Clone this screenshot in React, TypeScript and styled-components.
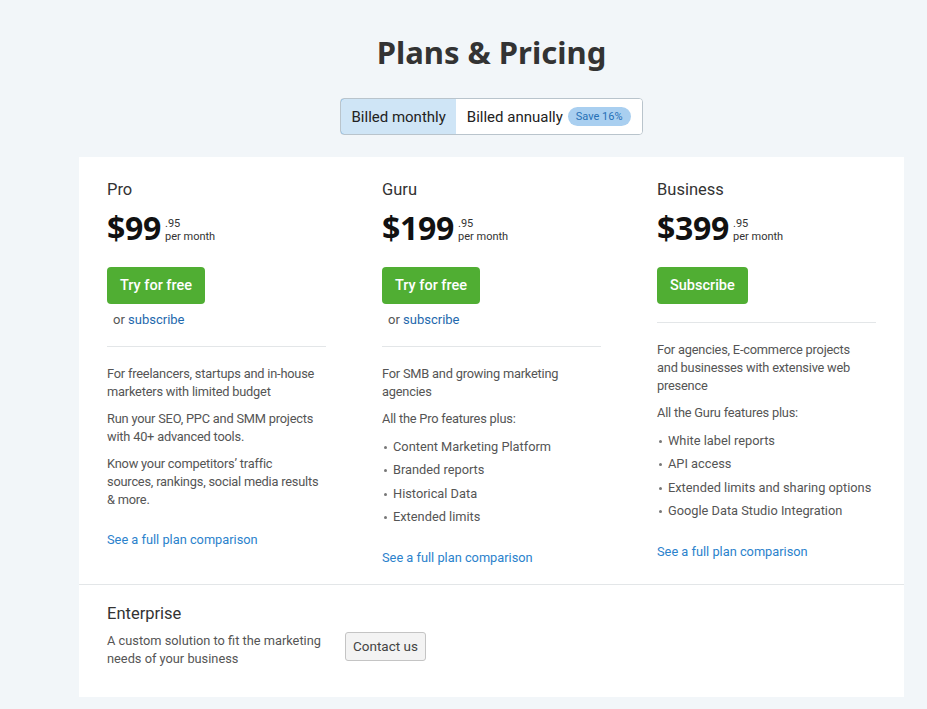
import React from "react";
import styled, { createGlobalStyle } from "styled-components";

const GlobalStyle = createGlobalStyle`
	body {
		margin: 0;
		background: #f2f6f9;
		font-family: Roboto, "Noto Sans", sans-serif;
		color: #333;
	}
`;

const Page = styled.div`
	display: flex;
	flex-direction: column;
	align-items: center;
	padding: 30px 0 0 56px;
`;

const Title = styled.h1`
	margin: 0;
	font-family: "Noto Sans", sans-serif;
	font-size: 31px;
	font-weight: 700;
	color: #333;
	line-height: 44px;
`;

const Toggle = styled.div`
	display: flex;
	margin-top: 24px;
	border: 1px solid #b9c4cc;
	border-radius: 4px;
	background: #fff;
	overflow: hidden;
	height: 35px;
`;

const ToggleOption = styled.div<{ $active?: boolean }>`
	display: flex;
	align-items: center;
	gap: 5px;
	padding: 0 10px;
	font-size: 15px;
	color: #222;
	background: ${(p) => (p.$active ? "#cfe5f6" : "#fff")};
	border: 1px solid ${(p) => (p.$active ? "#3b8fd2" : "transparent")};
	border-radius: ${(p) => (p.$active ? "4px 0 0 4px" : "0")};
	margin: -1px 0 -1px -1px;
`;

const Badge = styled.span`
	background: #a9cff0;
	color: #2670b6;
	font-size: 11px;
	border-radius: 10px;
	padding: 3px 8px;
`;

const Card = styled.div`
	margin-top: 22px;
	width: 825px;
	background: #fff;
`;

const Plans = styled.div`
	display: grid;
	grid-template-columns: repeat(3, 275px);
	padding-bottom: 17px;
	border-bottom: 1px solid #e3e6e8;
`;

const Plan = styled.div`
	padding: 21px 28px 0 28px;
	display: flex;
	flex-direction: column;
`;

const PlanName = styled.div`
	font-size: 16.5px;
	line-height: 24px;
	color: #333;
`;

const PriceRow = styled.div`
	display: flex;
	align-items: flex-start;
	margin-top: 7px;
	height: 38px;
`;

const Price = styled.span`
	font-family: "Noto Sans", sans-serif;
	font-size: 32px;
	font-weight: 700;
	color: #111;
	line-height: 38px;
	letter-spacing: -0.3px;
`;

const PriceNote = styled.span`
	display: flex;
	flex-direction: column;
	margin-left: 4px;
	margin-top: 8px;
	font-size: 11px;
	line-height: 13px;
	color: #333;
`;

const GreenButton = styled.button`
	align-self: flex-start;
	margin-top: 20px;
	height: 37px;
	padding: 0 13px;
	background: #50ae33;
	color: #fff;
	border: none;
	border-radius: 4px;
	font-family: inherit;
	font-size: 14.5px;
	font-weight: 500;
`;

const OrText = styled.div`
	margin: 7px 0 0 6px;
	font-size: 13px;
	line-height: 18px;
	color: #555;

	a {
		color: #1e68ad;
		text-decoration: none;
	}
`;

const Divider = styled.hr<{ $tight?: boolean }>`
	width: 100%;
	border: none;
	border-top: 1px solid #e3e6e8;
	margin: ${(p) => (p.$tight ? "18px 0 18px" : "17px 0 18px")};
`;

const Text = styled.p`
	margin: 0 0 9px;
	font-size: 12.8px;
	line-height: 18px;
	letter-spacing: -0.2px;
	white-space: pre-line;
	color: #555;
`;

const Features = styled.ul`
	margin: -2px 0 7px;
	padding-left: 11px;
	list-style: none;
`;

const Feature = styled.li`
	position: relative;
	font-size: 12.8px;
	line-height: 23.4px;
	color: #555;

	&::before {
		content: "";
		position: absolute;
		left: -9px;
		top: 11px;
		width: 3px;
		height: 3px;
		border-radius: 50%;
		background: #777;
	}
`;

const CompareLink = styled.a`
	margin-top: 13px;
	font-size: 12.8px;
	line-height: 18px;
	color: #2b82cc;
	text-decoration: none;
`;

const Enterprise = styled.div`
	display: flex;
	flex-direction: column;
	padding: 17px 28px 29px;
`;

const EnterpriseRow = styled.div`
	display: flex;
	align-items: flex-start;
	gap: 20px;
	margin-top: 6px;
`;

const EnterpriseText = styled.p`
	margin: 0;
	width: 218px;
	font-size: 12.8px;
	line-height: 18px;
	color: #555;
`;

const GreyButton = styled.button`
	height: 29px;
	padding: 0 7px;
	background: #f3f3f3;
	border: 1px solid #c4c4c4;
	border-radius: 3px;
	font-family: inherit;
	font-size: 13.5px;
	color: #444;
`;

type PlanData = {
	name: string;
	price: string;
	button: string;
	or?: boolean;
	texts: string[];
	features?: string[];
};

const plans: PlanData[] = [
	{
		name: "Pro",
		price: "$99",
		button: "Try for free",
		or: true,
		texts: [
			"For freelancers, startups and in-house marketers with limited budget",
			"Run your SEO, PPC and SMM projects with 40+ advanced tools.",
			"Know your competitors’ traffic\nsources, rankings, social media results & more.",
		],
	},
	{
		name: "Guru",
		price: "$199",
		button: "Try for free",
		or: true,
		texts: ["For SMB and growing marketing agencies", "All the Pro features plus:"],
		features: ["Content Marketing Platform", "Branded reports", "Historical Data", "Extended limits"],
	},
	{
		name: "Business",
		price: "$399",
		button: "Subscribe",
		texts: [
			"For agencies, E-commerce projects\nand businesses with extensive web presence",
			"All the Guru features plus:",
		],
		features: [
			"White label reports",
			"API access",
			"Extended limits and sharing options",
			"Google Data Studio Integration",
		],
	},
];

export default function App() {
	return (
		<>
			<GlobalStyle />
			<Page>
				<Title>Plans &amp; Pricing</Title>
				<Toggle>
					<ToggleOption $active>Billed monthly</ToggleOption>
					<ToggleOption>
						Billed annually <Badge>Save 16%</Badge>
					</ToggleOption>
				</Toggle>
				<Card>
					<Plans>
						{plans.map((plan) => (
							<Plan key={plan.name}>
								<PlanName>{plan.name}</PlanName>
								<PriceRow>
									<Price>{plan.price}</Price>
									<PriceNote>
										<span>.95</span>
										<span>per month</span>
									</PriceNote>
								</PriceRow>
								<GreenButton>{plan.button}</GreenButton>
								{plan.or && (
									<OrText>
										or <a href="#">subscribe</a>
									</OrText>
								)}
								<Divider $tight={!plan.or} />
								{plan.texts.map((t) => (
									<Text key={t}>{t}</Text>
								))}
								{plan.features && (
									<Features>
										{plan.features.map((f) => (
											<Feature key={f}>{f}</Feature>
										))}
									</Features>
								)}
								<CompareLink href="#">See a full plan comparison</CompareLink>
							</Plan>
						))}
					</Plans>
					<Enterprise>
						<PlanName>Enterprise</PlanName>
						<EnterpriseRow>
							<EnterpriseText>A custom solution to fit the marketing needs of your business</EnterpriseText>
							<GreyButton>Contact us</GreyButton>
						</EnterpriseRow>
					</Enterprise>
				</Card>
			</Page>
		</>
	);
}
